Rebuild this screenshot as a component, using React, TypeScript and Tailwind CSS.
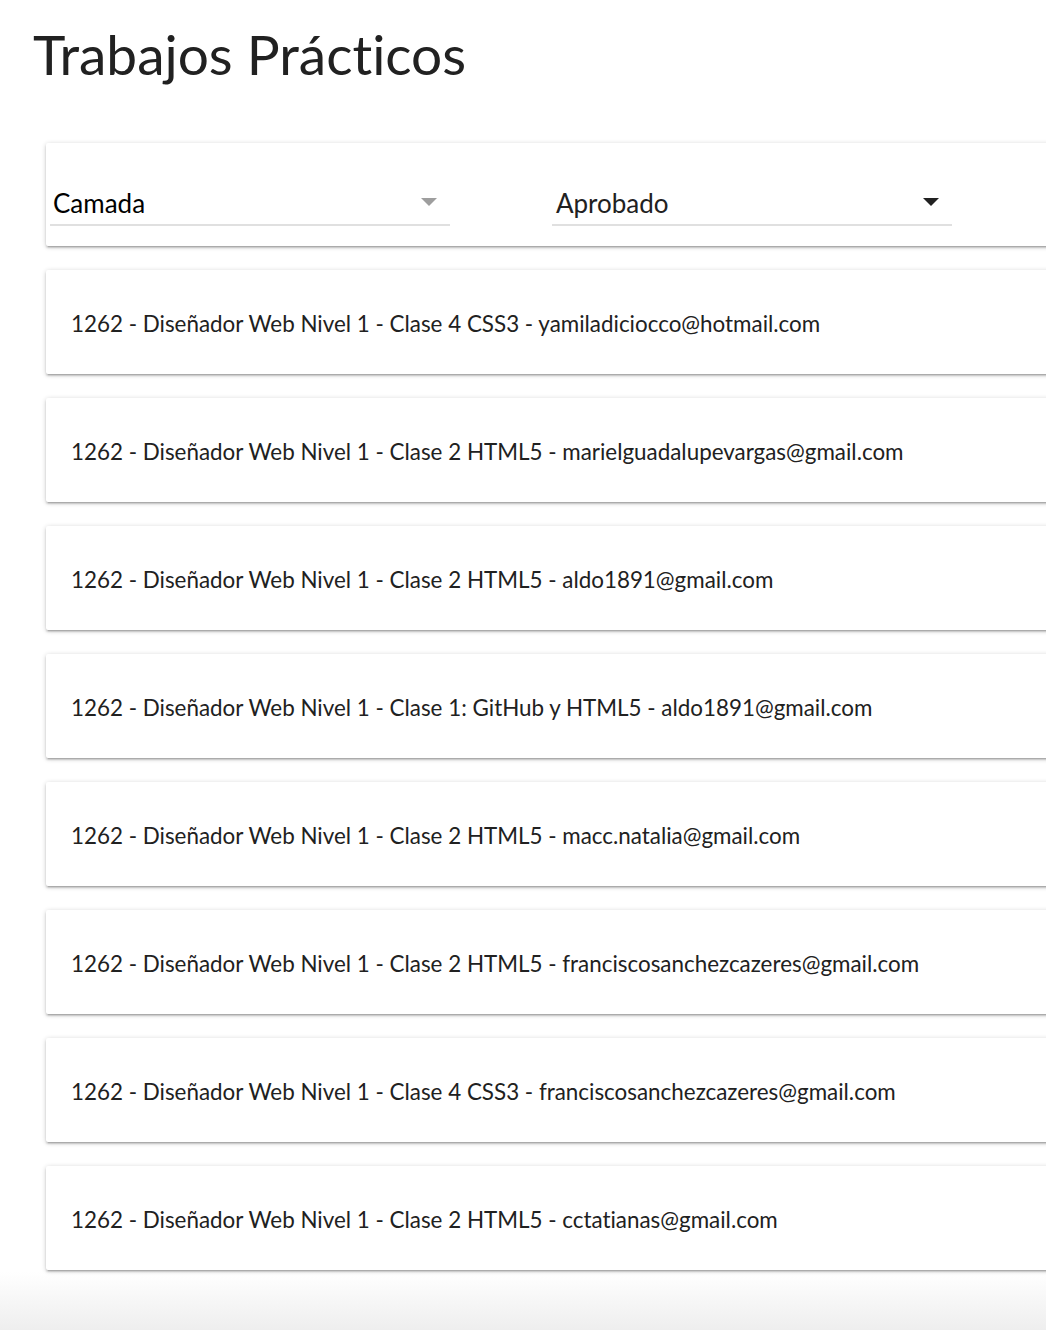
import React from "react";

const trabajos = [
  "1262 - Diseñador Web Nivel 1 - Clase 4 CSS3 - yamiladiciocco@hotmail.com",
  "1262 - Diseñador Web Nivel 1 - Clase 2 HTML5 - marielguadalupevargas@gmail.com",
  "1262 - Diseñador Web Nivel 1 - Clase 2 HTML5 - aldo1891@gmail.com",
  "1262 - Diseñador Web Nivel 1 - Clase 1: GitHub y HTML5 - aldo1891@gmail.com",
  "1262 - Diseñador Web Nivel 1 - Clase 2 HTML5 - macc.natalia@gmail.com",
  "1262 - Diseñador Web Nivel 1 - Clase 2 HTML5 - franciscosanchezcazeres@gmail.com",
  "1262 - Diseñador Web Nivel 1 - Clase 4 CSS3 - franciscosanchezcazeres@gmail.com",
  "1262 - Diseñador Web Nivel 1 - Clase 2 HTML5 - cctatianas@gmail.com",
];

const cardShadow =
  "shadow-[0_2px_2px_0_rgba(0,0,0,0.14),0_3px_1px_-2px_rgba(0,0,0,0.12),0_1px_5px_0_rgba(0,0,0,0.2)]";

const Caret = ({ muted }: { muted?: boolean }) => (
  <svg width="18" height="10" viewBox="0 0 18 10" className={muted ? "text-[#9e9e9e]" : "text-[#212121]"}>
    <path d="M1 1h16L9 9z" fill="currentColor" />
  </svg>
);

const Select: React.FC<{ label: string; muted?: boolean; className?: string }> = ({ label, muted, className }) => (
  <div className={`w-[400px] h-[40px] border-b-2 border-[#e0e0e0] flex items-end justify-between ${className ?? ""}`}>
    <span className={`text-[26px] leading-[34px] pb-[4px] ${muted ? "text-black pl-[3px]" : "text-[#212121] pl-[4px]"}`}>{label}</span>
    <span className="mb-[17px] mr-[12px]">
      <Caret muted={muted} />
    </span>
  </div>
);

export default function App() {
  return (
    <div
      className="relative min-h-[1330px] overflow-hidden bg-white text-[#212121] [font-variant-ligatures:none]"
      style={{ fontFamily: "Lato, 'Open Sans', sans-serif" }}
    >
      <h1 className="pl-[33px] pt-[22px] text-[55px] leading-[64px] font-normal text-[#212121]">Trabajos Prácticos</h1>

      <div className="relative z-10 pl-[46px] pt-[57px] flex flex-col gap-[24px] w-[1100px]">
        <div className={`h-[103px] bg-white rounded-[2px] ${cardShadow} flex items-start pt-[43px] pl-[4px]`}>
          <Select label="Camada" muted />
          <Select label="Aprobado" className="ml-[102px]" />
        </div>

        {trabajos.map((t, i) => (
          <div
            key={i}
            className={`h-[104px] bg-white rounded-[2px] ${cardShadow} flex items-center pl-[25px] pt-[3px]`}
          >
            <span className="text-[22.4px] leading-[28px] text-[#212121]">{t}</span>
          </div>
        ))}
      </div>

      <div className="absolute left-0 right-0 bottom-0 h-[58px] bg-gradient-to-b from-white to-[#eeeeee]" />
    </div>
  );
}
